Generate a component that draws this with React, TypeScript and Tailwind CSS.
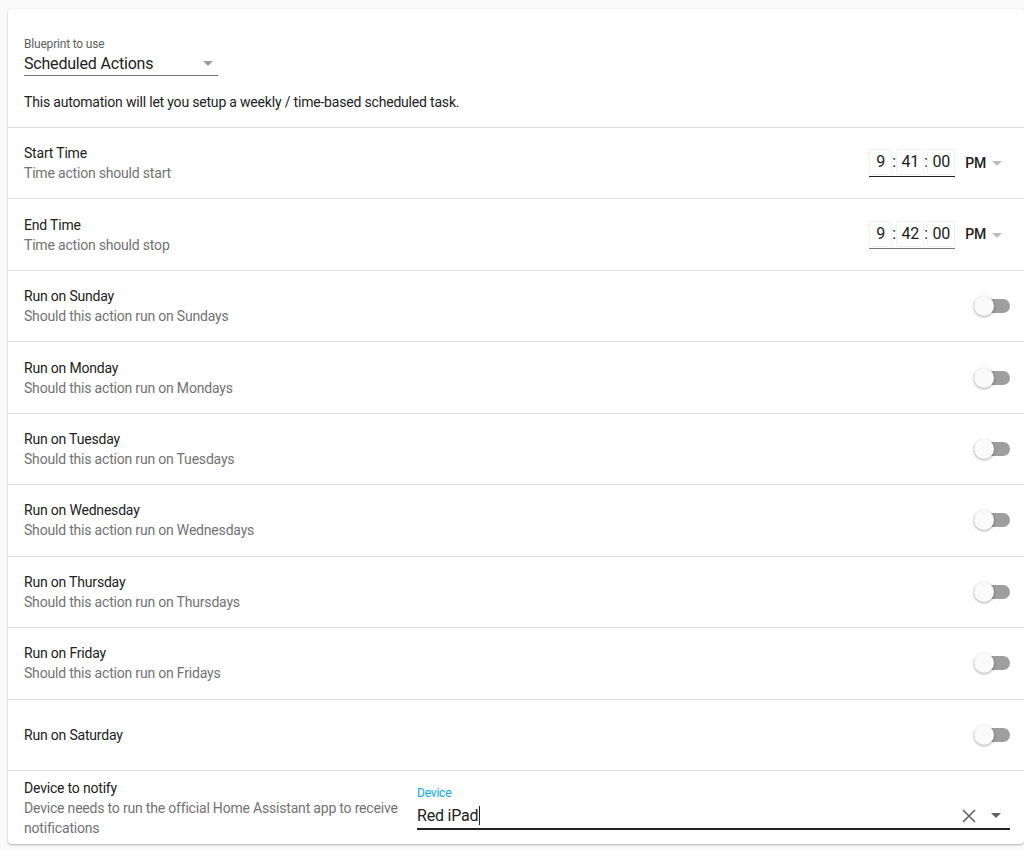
import React from "react";

const Toggle = () => (
  <div className="relative h-[20px] w-[36px] shrink-0">
    <div className="absolute left-0 top-[3px] h-[14px] w-[36px] rounded-full bg-[#9e9e9e]" />
    <div className="absolute left-0 top-0 h-[20px] w-[20px] rounded-full bg-[#fafafa] shadow-[0_1px_3px_rgba(0,0,0,0.35)]" />
  </div>
);

const Arrow = ({ color = "#9e9e9e" }: { color?: string }) => (
  <svg width="10" height="5" viewBox="0 0 10 5">
    <path d="M0 0 L5 5 L10 0 Z" fill={color} />
  </svg>
);

const TimeInput = ({ h, m, s, line }: { h: string; m: string; s: string; line: string }) => (
  <div className="flex items-center">
    <div className={`flex items-center border-b ${line} pb-[1px]`}>
      <div className="flex h-[26px] w-[23px] items-center justify-center border border-[#f2f2f2] text-[16px] text-[#212121]">{h}</div>
      <span className="w-[4px] text-center text-[16px] text-[#212121]">:</span>
      <div className="flex h-[26px] w-[28px] items-center justify-center border border-[#f2f2f2] text-[16px] text-[#212121]">{m}</div>
      <span className="w-[3px] text-center text-[16px] text-[#212121]">:</span>
      <div className="flex h-[26px] w-[28px] items-center justify-center border border-[#f2f2f2] text-[16px] text-[#212121]">{s}</div>
    </div>
    <div className="ml-[10px] mr-[8px] flex items-center">
      <span className="text-[14px] font-medium text-[#212121]">PM</span>
      <span className="ml-[6px] mt-[1px] flex"><Arrow color="#bdbdbd" /></span>
    </div>
  </div>
);

const Row = ({ title, desc, children }: { title: string; desc?: string; children: React.ReactNode }) => (
  <div className="flex h-[71.44px] items-center border-t border-[#e0e0e0] pl-[16px] pr-[14px]">
    <div className="flex-1">
      <div className="text-[14px] leading-[20px] text-[#212121]">{title}</div>
      {desc && <div className="text-[14px] leading-[20px] text-[#727272]">{desc}</div>}
    </div>
    {children}
  </div>
);

const days = ["Sunday", "Monday", "Tuesday", "Wednesday", "Thursday", "Friday"];

export default function App() {
  return (
    <div
      className="min-h-[850px] bg-[#fafafa] pl-[8px] pt-[9px] tracking-[-0.012em]"
      style={{ fontFamily: "Roboto, 'Noto Sans', sans-serif" }}
    >
      <div className="w-[1016px] rounded-[4px] bg-white shadow-[0_1px_3px_rgba(0,0,0,0.2),0_1px_1px_rgba(0,0,0,0.12)]">
        <div className="px-[16px] pb-[15px] pt-[27px]">
          <div className="text-[12px] leading-[16px] text-[#616161]">Blueprint to use</div>
          <div className="flex h-[24px] w-[194px] items-center justify-between border-b border-[#737373]">
            <span className="text-[16px] text-[#212121]">Scheduled Actions</span>
            <span className="mr-[5px] flex"><Arrow color="#9e9e9e" /></span>
          </div>
          <div className="mt-[16px] text-[14px] leading-[20px] text-[#212121]">
            This automation will let you setup a weekly / time-based scheduled task.
          </div>
        </div>
        <Row title="Start Time" desc="Time action should start">
          <TimeInput h="9" m="41" s="00" line="border-[#212121]" />
        </Row>
        <Row title="End Time" desc="Time action should stop">
          <TimeInput h="9" m="42" s="00" line="border-[#757575]" />
        </Row>
        {days.map((d) => (
          <Row key={d} title={`Run on ${d}`} desc={`Should this action run on ${d}s`}>
            <Toggle />
          </Row>
        ))}
        <Row title="Run on Saturday">
          <Toggle />
        </Row>
        <div className="flex border-t border-[#e0e0e0] pb-[6px] pl-[16px] pr-[14px] pt-[7px]">
          <div className="flex-1 pr-[6px]">
            <div className="text-[14px] leading-[20px] text-[#212121]">Device to notify</div>
            <div className="text-[14px] leading-[20px] text-[#727272]">
              Device needs to run the official Home Assistant app to receive notifications
            </div>
          </div>
          <div className="w-[593px] shrink-0 pt-[7px]">
            <div className="text-[12px] leading-[16px] text-[#03a9f4]">Device</div>
            <div className="flex h-[29px] items-center border-b-2 border-[#212121] pt-[3px]">
              <span className="text-[16px] text-[#212121]">Red iPad</span>
              <span className="ml-[1px] h-[19px] w-[1px] bg-[#212121]" />
              <span className="flex-1" />
              <svg width="14" height="14" viewBox="0 0 14 14" className="mr-[15px]">
                <path d="M1 1 L13 13 M13 1 L1 13" stroke="#616161" strokeWidth="1.6" />
              </svg>
              <span className="mr-[9px] flex"><Arrow color="#616161" /></span>
            </div>
          </div>
        </div>
      </div>
    </div>
  );
}
